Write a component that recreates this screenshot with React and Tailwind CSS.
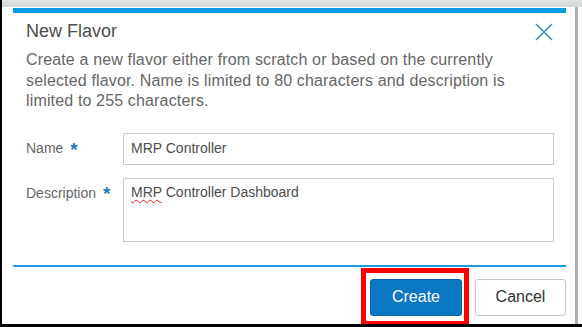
export default function App() {
  return (
    <div
      className="w-[582px] h-[327px] flex flex-col bg-white border-l-2 border-b-[3px] border-black overflow-hidden"
      style={{ fontFamily: '"Liberation Sans", Arial, sans-serif' }}
    >
      <div className="h-[7px] shrink-0 bg-gradient-to-b from-[#e2e5e5] to-[#d3d8d8]" />
      <div className="flex flex-1 min-h-0">
        <div className="w-[573px] shrink-0 flex flex-col pl-[11px] pr-[9px]">
          <div className="mt-[1px] h-[5px] bg-[#009de0]" />
          <div className="mt-[7px] flex justify-between pl-[13px] pr-[13px]">
            <div className="text-[18px] leading-[22px] text-[#4d4d4d]">New Flavor</div>
            <svg className="mt-[3px]" width="18" height="18" viewBox="0 0 18 18">
              <path d="M1 1 L17 17 M17 1 L1 17" stroke="#3a8ccc" strokeWidth="1.6" fill="none" />
            </svg>
          </div>
          <div className="mt-[8px] pl-[13px] text-[16px] leading-[20.5px] tracking-[0.15px] text-[#666666] whitespace-nowrap">
            Create a new flavor either from scratch or based on the currently
            <br />
            selected flavor. Name is limited to 80 characters and description is
            <br />
            limited to 255 characters.
          </div>
          <div className="mt-[21px] flex items-center pl-[13px]">
            <div className="w-[97px] text-[14px] text-[#666666] flex items-center">
              <span>Name</span>
              <span className="ml-[7px] text-[19px] leading-[14px] font-bold text-[#2b7bbd] mt-[2px]">*</span>
            </div>
            <div className="w-[431px] h-[32px] border border-[#c9c9c9] flex items-center px-[7px] text-[14px] text-[#4d4d4d]">
              MRP Controller
            </div>
          </div>
          <div className="mt-[13px] flex items-start pl-[13px]">
            <div className="w-[97px] pt-[7px] text-[14px] leading-[16px] text-[#666666] flex items-center">
              <span>Description</span>
              <span className="ml-[7px] text-[19px] leading-[14px] font-bold text-[#2b7bbd] mt-[2px]">*</span>
            </div>
            <div className="w-[431px] h-[64px] border border-[#c9c9c9] px-[7px] pt-[5px] text-[14px] leading-[16px] text-[#4d4d4d]">
              <span className="underline decoration-wavy decoration-[#e02020] decoration-1 underline-offset-2">MRP</span> Controller Dashboard
            </div>
          </div>
          <div className="mt-[23px] h-[2px] bg-[#1a9ee0]" />
          <div className="mt-[12px] flex justify-end gap-[13px]">
            <div className="relative">
              <button className="w-[92px] h-[37px] rounded-[3px] bg-[#0a78c3] border border-[#0866a8] text-white text-[16px]">
                Create
              </button>
              <div className="absolute -left-[9px] -top-[11px] w-[108px] h-[58px] border-[5px] border-[#ff0000]" />
            </div>
            <button className="w-[91px] h-[37px] rounded-[3px] bg-white border border-[#c6c6c6] text-[#333333] text-[16px]">
              Cancel
            </button>
          </div>
        </div>
        <div className="w-[3px] shrink-0 bg-[#a9b1b6]" />
        <div className="flex-1 bg-white" />
      </div>
    </div>
  );
}
